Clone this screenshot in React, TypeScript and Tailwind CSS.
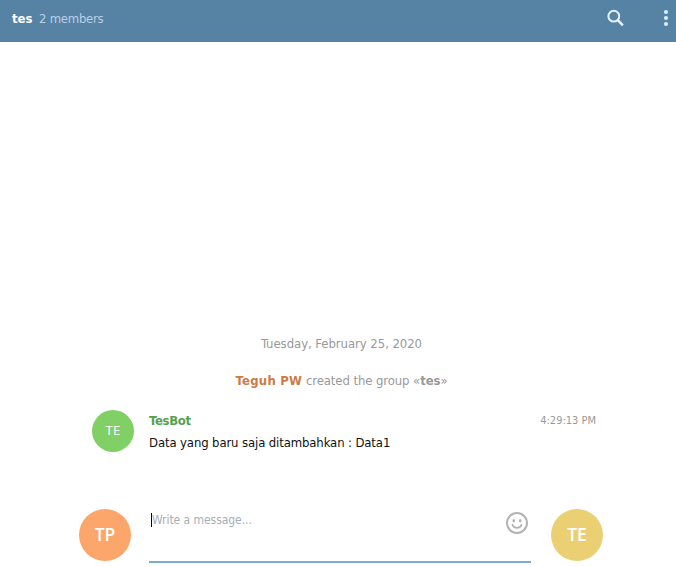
import React from "react";

function Avatar({ initials, className }: { initials: string; className: string }) {
  return (
    <div className={`flex shrink-0 items-center justify-center rounded-full font-['Open_Sans',sans-serif] text-white ${className}`}>
      {initials}
    </div>
  );
}

function Header() {
  return (
    <header className="flex h-[42px] shrink-0 items-start bg-[#5682a3] pl-3 leading-4">
      <h1 className="mt-[11px] w-[27px] whitespace-nowrap text-[13px] font-bold text-white">tes</h1>
      <span className="mt-[11px] whitespace-nowrap text-[13px] tracking-[-0.25px] text-[#b9cfe3]">2 members</span>
      <button aria-label="Search" className="mt-[9px] ml-auto">
        <svg width="18" height="18" viewBox="0 0 18 18" fill="none" stroke="#e4f3ff">
          <circle cx="6.8" cy="7.2" r="5.4" strokeWidth="2" />
          <path d="M10.8 11.2L15.9 16.3" strokeWidth="2.5" />
        </svg>
      </button>
      <button aria-label="More" className="mt-[9px] mr-[7px] ml-[38px]">
        <svg width="6" height="18" viewBox="0 0 6 18" fill="#d5edff">
          <circle cx="3" cy="3" r="2.1" />
          <circle cx="3" cy="9" r="2.1" />
          <circle cx="3" cy="15" r="2.1" />
        </svg>
      </button>
    </header>
  );
}

function Message() {
  return (
    <article className="mt-[21px] flex pr-[80px] pl-[92px]">
      <Avatar initials="TE" className="size-[42px] bg-[#80d066] text-[13px] font-medium tracking-[0.3px]" />
      <div className="ml-[15px] flex-1">
        <div className="flex h-[22px] items-center justify-between">
          <b className="text-[13px] tracking-[-0.3px] text-[#55a14e]">TesBot</b>
          <time className="text-[11px] text-[#999]">4:29:13 PM</time>
        </div>
        <p className="text-[13px] leading-[22px] tracking-[-0.12px] text-[#111]">
          Data yang baru saja ditambahkan : Data1
        </p>
      </div>
    </article>
  );
}

function Composer() {
  return (
    <footer className="flex h-[58px] shrink-0 pl-[79px]">
      <Avatar initials="TP" className="size-[52px] bg-[#fda66b] pb-[2px] text-[17.5px] font-semibold" />
      <div className="ml-[18px] flex h-[54px] w-[382px] items-start border-b-2 border-[#7eaccb]">
        <div className="mt-1 ml-[2px] h-[14px] w-px bg-black" />
        <span className="mt-[3px] text-[12px] leading-4 tracking-[-0.05px] text-[#a5afb8]">Write a message...</span>
        <svg className="mt-[3px] mr-[3px] ml-auto" width="22" height="22" viewBox="0 0 22 22" fill="none" stroke="#b3b3b3">
          <circle cx="11" cy="11" r="10" strokeWidth="2" />
          <path d="M6.5 12.7C7.6 16.8 14.4 16.8 15.5 12.7" strokeWidth="1.7" strokeLinecap="round" />
          <ellipse cx="7.8" cy="8.8" rx="1.3" ry="1.7" fill="#b3b3b3" stroke="none" />
          <ellipse cx="14.2" cy="8.8" rx="1.3" ry="1.7" fill="#b3b3b3" stroke="none" />
        </svg>
      </div>
      <Avatar initials="TE" className="ml-[20px] size-[52px] bg-[#ebd073] pb-[2px] text-[17.5px] font-semibold" />
    </footer>
  );
}

export default function App() {
  return (
    <div className="flex h-[567px] w-[676px] flex-col overflow-hidden bg-white font-['DejaVu_Sans_Condensed','DejaVu_Sans',sans-serif]">
      <Header />
      <main className="flex flex-1 flex-col justify-end pb-[55px]">
        <p className="pl-[7px] text-center text-[13px] leading-4 tracking-[-0.05px] text-[#999]">
          Tuesday, February 25, 2020
        </p>
        <p className="mt-[21px] pl-[7px] text-center text-[13px] leading-4 tracking-[-0.09px] text-[#999]">
          <b className="tracking-[0.25px] text-[#cc7b46]">Teguh PW</b> created the group «<b>tes</b>»
        </p>
        <Message />
      </main>
      <Composer />
    </div>
  );
}
